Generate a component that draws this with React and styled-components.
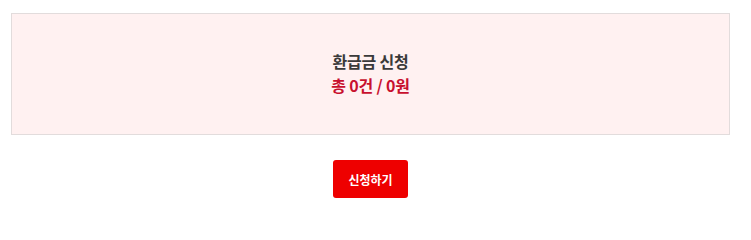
import React from 'react';
import styled, { createGlobalStyle } from 'styled-components';

const GlobalStyle = createGlobalStyle`
  body {
    margin: 0;
    background: #fff;
    font-family: "Noto Sans CJK KR", "Noto Sans", sans-serif;
  }
`;

const Page = styled.div`
  padding: 13px 21px 0 11px;
`;

const SummaryBox = styled.div`
  height: 122px;
  box-sizing: border-box;
  border: 1px solid #e2dcdc;
  background: #fff1f1;
  display: flex;
  flex-direction: column;
  align-items: center;
  justify-content: center;
  padding-bottom: 2px;
`;

const Title = styled.div`
  font-size: 16px;
  font-weight: 700;
  color: #3a3a3a;
  line-height: 24px;
  letter-spacing: -0.2px;
`;

const Total = styled.div`
  font-size: 16px;
  font-weight: 700;
  color: #c8102e;
  line-height: 24px;
  letter-spacing: -0.2px;
`;

const Actions = styled.div`
  display: flex;
  justify-content: center;
  padding-top: 25px;
`;

const ApplyButton = styled.button`
  width: 75px;
  height: 38px;
  border: none;
  border-radius: 3px;
  background: #ee0000;
  color: #fff;
  font-family: inherit;
  font-size: 12px;
  font-weight: 700;
  cursor: pointer;
`;

export default function App() {
  return (
    <Page>
      <GlobalStyle />
      <SummaryBox>
        <Title>환급금 신청</Title>
        <Total>총 0건 / 0원</Total>
      </SummaryBox>
      <Actions>
        <ApplyButton>신청하기</ApplyButton>
      </Actions>
    </Page>
  );
}
